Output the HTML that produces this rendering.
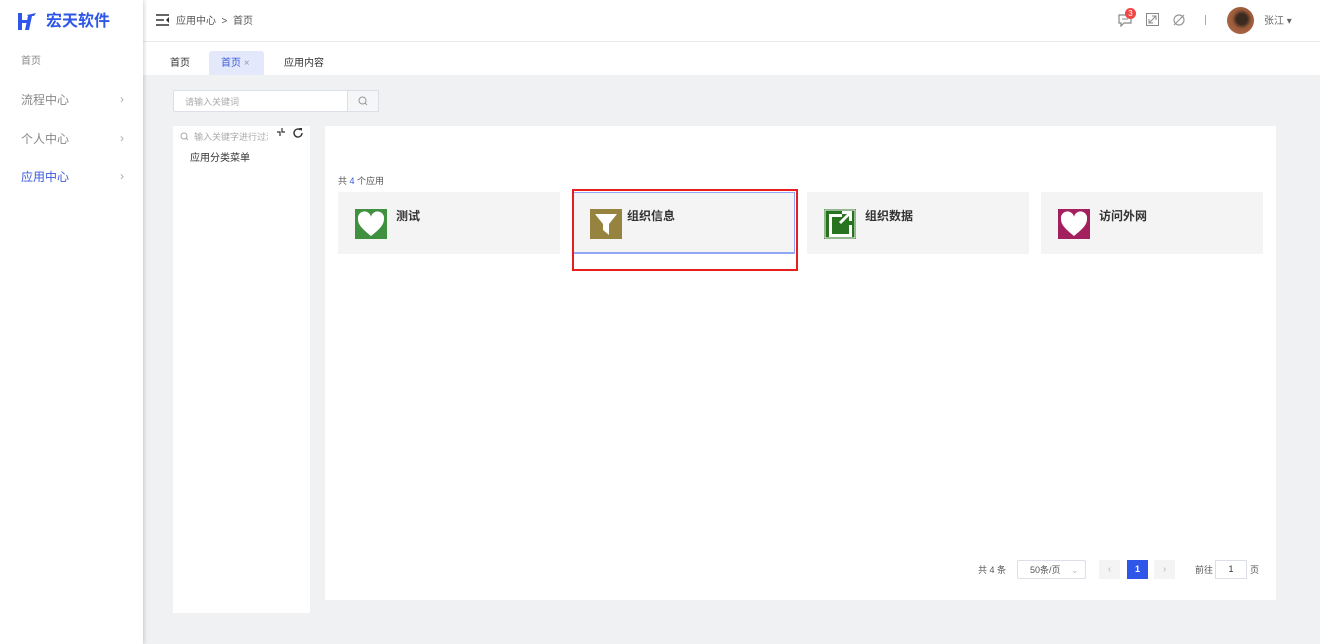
<!DOCTYPE html>
<html><head><meta charset="utf-8"><style>
*{margin:0;padding:0;box-sizing:border-box}
body{width:1320px;height:644px;overflow:hidden;background:#f0f1f3;font-family:"Liberation Sans","Noto Sans CJK SC",sans-serif;font-size:12px;color:#333;position:relative;line-height:1.8}
.abs{position:absolute}
.side{left:0;top:0;width:143px;height:644px;background:#fff;box-shadow:1px 0 4px rgba(0,0,0,.18);z-index:2}
.nav{position:absolute;left:21px;font-size:12px;color:#888}
.arr{position:absolute;left:120px;color:#aaa;font-size:12px}
.hdr{left:143px;top:0;width:1177px;height:42px;background:#fff;border-bottom:1px solid #e8e8e8}
.tabs{left:143px;top:42px;width:1177px;height:33px;background:#fff}
.card{position:absolute;top:192px;width:222px;height:62px;background:#f4f4f4}
.card .ic{position:absolute;left:17px;top:17px;width:32px;height:30px}
.card .t{position:absolute;left:58px;top:14px;font-size:12px;font-weight:bold;color:#333}
</style></head><body>
<div class="abs side">
 <svg class="abs" style="left:17px;top:12px" width="20" height="19" viewBox="0 0 20 19"><path d="M1 1h4v17H1zM5 8h7v3H5zM10 3l9-2-2 3h-2l-3 14H8l3-14z" fill="#2e56e8"/></svg>
 <div class="abs" style="left:46px;top:8px;font-size:16px;font-weight:bold;color:#2e56e8">宏天软件</div>
 <div class="nav" style="top:53px;font-size:10px">首页</div>
 <div class="nav" style="top:90px">流程中心</div><div class="arr" style="top:89px">›</div>
 <div class="nav" style="top:129px">个人中心</div><div class="arr" style="top:128px">›</div>
 <div class="nav" style="top:167px;color:#3b5bdb">应用中心</div><div class="arr" style="top:166px">›</div>
</div>
<div class="abs hdr">
 <svg class="abs" style="left:13px;top:14px" width="14" height="12" viewBox="0 0 14 12"><path d="M0 1h13M0 6h8M0 11h13" stroke="#333" stroke-width="1.5"/><path d="M13 3v6l-3-3z" fill="#333"/></svg>
 <div class="abs" style="left:33px;top:13px;font-size:10px;color:#555">应用中心 &nbsp;&gt;&nbsp; 首页</div>
 <svg class="abs" style="left:975px;top:13px" width="16" height="14" viewBox="0 0 16 14"><path d="M1 2h12v8H6l-3 3v-3H1z" fill="none" stroke="#888" stroke-width="1.2"/><path d="M4 6h6" stroke="#888"/></svg>
 <div class="abs" style="left:982px;top:8px;width:11px;height:11px;border-radius:50%;background:#f04545;color:#fff;font-size:8px;text-align:center;line-height:11px">3</div>
 <svg class="abs" style="left:1003px;top:13px" width="13" height="13"><rect x=".5" y=".5" width="12" height="12" fill="none" stroke="#888"/><path d="M3 10l7-7M6 3h4v4M3 6v4h4" stroke="#888" fill="none"/></svg>
 <svg class="abs" style="left:1029px;top:13px" width="14" height="14"><circle cx="7" cy="7" r="5" fill="none" stroke="#999" stroke-width="1.2"/><path d="M2 12L12 2" stroke="#999" stroke-width="1.2"/></svg>
 <div class="abs" style="left:1062px;top:15px;width:1px;height:10px;background:#aaa"></div>
 <div class="abs" style="left:1084px;top:7px;width:27px;height:27px;border-radius:50%;background:radial-gradient(circle at 55% 45%,#3a2a20 0 25%,#9a5a3a 45%,#b87050)"></div>
 <div class="abs" style="left:1121px;top:13px;font-size:10px;color:#666">张江 ▾</div>
</div>
<div class="abs tabs">
 <div class="abs" style="left:27px;top:13px;font-size:10px;color:#333">首页</div>
 <div class="abs" style="left:66px;top:9px;width:55px;height:24px;background:#e3e8fb;border-radius:3px 3px 0 0"></div>
 <div class="abs" style="left:78px;top:13px;font-size:10px;color:#3b5bdb">首页 <span style="color:#99a">×</span></div>
 <div class="abs" style="left:141px;top:13px;font-size:10px;color:#333">应用内容</div>
</div>
<div class="abs" style="left:173px;top:90px;width:175px;height:22px;background:#fff;border:1px solid #dcdfe6;border-radius:2px 0 0 2px"></div>
<div class="abs" style="left:185px;top:94px;font-size:9px;color:#aaa">请输入关键词</div>
<div class="abs" style="left:347px;top:90px;width:32px;height:22px;background:#f5f6f8;border:1px solid #dcdfe6"></div>
<svg class="abs" style="left:358px;top:96px" width="10" height="10"><circle cx="4.5" cy="4.5" r="3.5" fill="none" stroke="#999"/><path d="M7 7l2 2" stroke="#999"/></svg>
<div class="abs" style="left:173px;top:126px;width:137px;height:487px;background:#fff"></div>
<svg class="abs" style="left:180px;top:132px" width="9" height="9"><circle cx="4" cy="4" r="3" fill="none" stroke="#aaa"/><path d="M6 6l2 2" stroke="#aaa"/></svg>
<div class="abs" style="left:194px;top:129px;font-size:9px;color:#aaa;width:74px;overflow:hidden;white-space:nowrap">输入关键字进行过滤</div>
<svg class="abs" style="left:276px;top:127px" width="10" height="10"><path d="M1 5h3V9M9 5H6V1" fill="none" stroke="#333" stroke-width="1.2"/></svg>
<svg class="abs" style="left:292px;top:127px" width="12" height="12"><path d="M10 6a4 4 0 1 1-1.5-3.1" fill="none" stroke="#333" stroke-width="1.4"/><path d="M7 1h3v3z" fill="#333"/></svg>
<div class="abs" style="left:190px;top:150px;font-size:10px;color:#333">应用分类菜单</div>
<div class="abs" style="left:325px;top:126px;width:951px;height:474px;background:#fff"></div>
<div class="abs" style="left:338px;top:173px;font-size:9px;color:#555">共 <span style="color:#3b5bdb">4</span> 个应用</div>
<div class="card" style="left:338px"><svg class="ic" viewBox="0 0 32 30"><rect width="32" height="30" fill="#3f9140"/><path d="M16 27C6 19 3 15 3 10a6 6 0 0 1 13-2 6 6 0 0 1 13 2c0 5-3 9-13 17z" fill="#fff"/></svg><div class="t">测试</div></div>
<div class="card" style="left:573px;border:1px solid #8fa7f5;border-bottom-width:2px"><svg class="ic" style="left:16px;top:16px" viewBox="0 0 32 30"><rect width="32" height="30" fill="#978340"/><path d="M5 5h22l-8 10v11l-6-5v-6z" fill="#fff"/></svg><div class="t" style="left:53px;top:13px">组织信息</div></div>
<div class="abs" style="left:572px;top:189px;width:226px;height:82px;border:2px solid #e81d1d"></div>
<div class="card" style="left:807px"><svg class="ic" viewBox="0 0 32 30"><rect width="32" height="30" fill="#27731f"/><rect x="1" y="1" width="30" height="28" fill="none" stroke="#fff" stroke-width="1"/><path d="M5 5h13v3H8v17h17V16h3v12H5z" fill="#fff"/><path d="M15 13l8-8h-5V2h10v10h-3V7l-8 8z" fill="#fff"/></svg><div class="t">组织数据</div></div>
<div class="card" style="left:1041px"><svg class="ic" viewBox="0 0 32 30"><rect width="32" height="30" fill="#a3205f"/><path d="M16 27C6 19 3 15 3 10a6 6 0 0 1 13-2 6 6 0 0 1 13 2c0 5-3 9-13 17z" fill="#fff"/></svg><div class="t">访问外网</div></div>
<div class="abs" style="left:978px;top:562px;font-size:9px;color:#555">共 4 条</div>
<div class="abs" style="left:1017px;top:560px;width:69px;height:19px;border:1px solid #dcdfe6;border-radius:2px;font-size:9px;color:#555;padding:1px 0 0 12px">50条/页 <span style="color:#bbb;margin-left:8px">⌄</span></div>
<div class="abs" style="left:1099px;top:560px;width:21px;height:19px;background:#f4f4f5;color:#bbb;font-size:10px;text-align:center;line-height:19px">‹</div>
<div class="abs" style="left:1127px;top:560px;width:21px;height:19px;background:#2e56e8;color:#fff;font-size:9px;font-weight:bold;text-align:center;line-height:19px">1</div>
<div class="abs" style="left:1154px;top:560px;width:21px;height:19px;background:#f4f4f5;color:#bbb;font-size:10px;text-align:center;line-height:19px">›</div>
<div class="abs" style="left:1195px;top:562px;font-size:9px;color:#555">前往</div>
<div class="abs" style="left:1215px;top:560px;width:32px;height:19px;border:1px solid #dcdfe6;font-size:9px;text-align:center;line-height:17px">1</div>
<div class="abs" style="left:1250px;top:562px;font-size:9px;color:#555">页</div>
</body></html>
